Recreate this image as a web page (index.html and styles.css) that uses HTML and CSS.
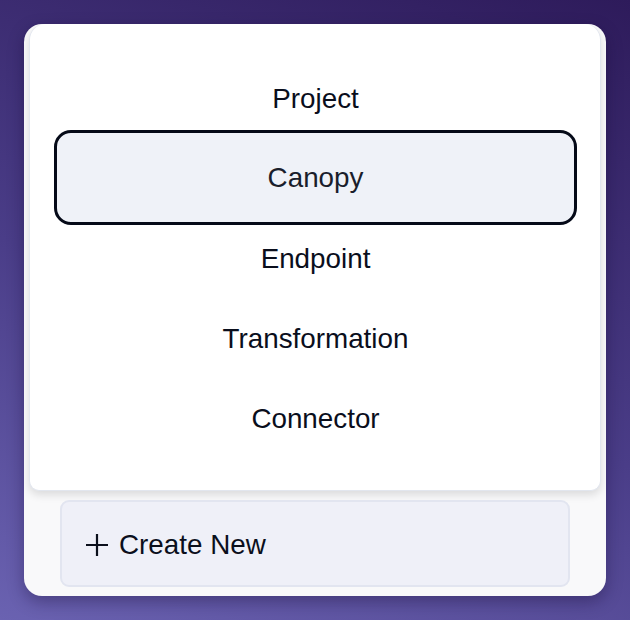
FILE: index.html
```html
<!DOCTYPE html>
<html>
<head>
<meta charset="utf-8">
<link rel="stylesheet" href="styles.css">
</head>
<body>
<div class="card">
  <div class="popup">
    <div class="item">Project</div>
    <div class="item selected">Canopy</div>
    <div class="item">Endpoint</div>
    <div class="item">Transformation</div>
    <div class="item">Connector</div>
  </div>
  <button class="create">
    <svg class="plus" width="22" height="22" viewBox="0 0 22 22"><path d="M11 0v22M0 11h22" stroke="#0b0f1c" stroke-width="2.2" fill="none"/></svg>
    <span>Create New</span>
  </button>
</div>
</body>
</html>
```
FILE: styles.css
```css
html, body {
  margin: 0;
  padding: 0;
}
body {
  width: 630px;
  height: 620px;
  overflow: hidden;
  background: linear-gradient(20deg, #6a62b1 0%, #4a3d88 45%, #2e1b5b 100%);
  font-family: "Liberation Sans", Arial, sans-serif;
  padding-top: 24px;
  box-sizing: border-box;
}
.card {
  margin-left: 24px;
  width: 582px;
  height: 572px;
  background: #f9f9fa;
  border-radius: 18px;
  box-shadow: 0 6px 16px rgba(20, 10, 50, 0.35);
  display: flex;
  flex-direction: column;
  box-sizing: border-box;
}
.popup {
  margin: 0 5px 0 5px;
  height: 467px;
  background: #ffffff;
  border: 1px solid #e2e6ee;
  border-top: none;
  border-radius: 16px 16px 10px 10px;
  box-shadow: 0 4px 9px rgba(0, 0, 0, 0.12);
  box-sizing: border-box;
  padding: 35px 23px 0 24px;
  display: flex;
  flex-direction: column;
}
.item {
  height: 80px;
  display: flex;
  align-items: center;
  justify-content: center;
  font-size: 27.8px;
  color: #0a0e1c;
  flex-shrink: 0;
}
.item.selected {
  height: 95px;
  margin: -9px 0 -6px;
  border: 3px solid #050a18;
  border-radius: 17px;
  background: #eff2f8;
  color: #1a1e2c;
  box-sizing: border-box;
}
.create {
  margin: 9px 0 0 36px;
  width: 510px;
  height: 87px;
  background: #eff0f8;
  border: 2px solid #e2e5f0;
  border-radius: 9px;
  display: flex;
  align-items: center;
  gap: 11px;
  padding: 3px 0 0 24px;
  box-sizing: border-box;
  font-family: "Liberation Sans", Arial, sans-serif;
  font-size: 27.8px;
  color: #0b0f1c;
  cursor: pointer;
}
.plus {
  flex-shrink: 0;
}
```
